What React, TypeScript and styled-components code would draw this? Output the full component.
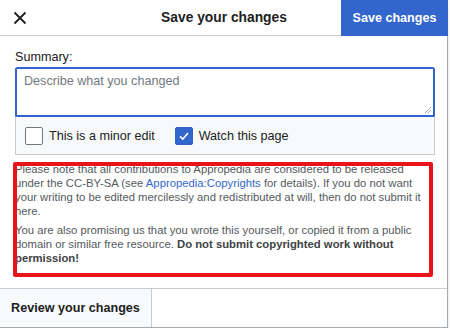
import React from "react";
import styled, { createGlobalStyle } from "styled-components";

const Global = createGlobalStyle`
  html, body { margin: 0; padding: 0; background: #fff; }
  body { font-family: "Liberation Sans", Arial, sans-serif; color: #202122; font-size: 12.6px; }
`;

const Dialog = styled.div`
  width: 448px;
  height: 328px;
  box-sizing: border-box;
  border-right: 1px solid #a2a9b1;
  border-bottom: 1px solid #a2a9b1;
  box-shadow: 0 1px 2px rgba(0,0,0,0.15);
  display: flex;
  flex-direction: column;
  background: #fff;
`;

const Header = styled.div`
  height: 35px;
  border-bottom: 1px solid #c8ccd1;
  display: flex;
  align-items: stretch;
  flex-shrink: 0;
  margin-right: -1px;
`;

const CloseButton = styled.button`
  width: 40px;
  border: 0;
  background: transparent;
  padding: 0;
  display: flex;
  align-items: center;
  justify-content: center;
`;

const Title = styled.div`
  flex: 1;
  display: flex;
  align-items: center;
  justify-content: center;
  font-weight: bold;
  font-size: 13.8px;
  padding-left: 67px;
`;

const PrimaryButton = styled.button`
  width: 107px;
  height: 36px;
  border: 0;
  background: #3366cc;
  color: #fff;
  font-family: inherit;
  font-weight: bold;
  font-size: 12.6px;
  padding: 0;
`;

const Body = styled.div`
  flex: 1;
  padding: 11px 13px 0 15px;
`;

const Label = styled.div`
  font-size: 12.6px;
  line-height: 20px;
`;

const SummaryBox = styled.div`
  width: 420px;
  height: 50px;
  box-sizing: border-box;
  border: 1px solid #3366cc;
  box-shadow: inset 0 0 0 1px #3366cc;
  border-radius: 2px 2px 0 0;
  padding: 6px 8px;
  font-size: 12.6px;
  color: #72777d;
  position: relative;
`;

const Grip = styled.svg`
  position: absolute;
  right: 2px;
  bottom: 2px;
`;

const OptionsBar = styled.div`
  width: 420px;
  height: 38px;
  box-sizing: border-box;
  background: #f8f9fa;
  border: 1px solid #c8ccd1;
  border-top: 0;
  display: flex;
  align-items: center;
  padding-left: 9px;
  gap: 20px;
`;

const Option = styled.label`
  display: flex;
  align-items: center;
  gap: 6px;
  font-size: 12.6px;
`;

const Box = styled.span<{ $checked?: boolean }>`
  width: 18px;
  height: 18px;
  box-sizing: border-box;
  border-radius: 2px;
  border: 1px solid ${(p) => (p.$checked ? "#3366cc" : "#72777d")};
  background: ${(p) => (p.$checked ? "#3366cc" : "#fff")};
  display: flex;
  align-items: center;
  justify-content: center;
`;

const License = styled.div`
  position: relative;
  margin-top: 7px;
  width: 415px;
  font-size: 11.3px;
  line-height: 14px;
  color: #54595d;
`;

const Para = styled.p`
  margin: 0 0 5px;
`;

const Link = styled.a`
  color: #3366cc;
  text-decoration: none;
`;

const Strong = styled.b`
  color: #404244;
`;

const Highlight = styled.div`
  position: absolute;
  left: -2px;
  top: 0;
  width: 420px;
  height: 115px;
  box-sizing: border-box;
  border: 4px solid #e8141a;
  border-radius: 2px;
  pointer-events: none;
`;

const Footer = styled.div`
  height: 38px;
  border-top: 1px solid #c8ccd1;
  display: flex;
  flex-shrink: 0;
`;

const SecondaryButton = styled.button`
  width: 152px;
  border: 0;
  border-right: 1px solid #c8ccd1;
  background: #f8f9fa;
  font-family: inherit;
  font-weight: bold;
  font-size: 12.6px;
  color: #202122;
  padding: 0;
`;

export default function App() {
  return (
    <>
      <Global />
      <Dialog>
        <Header>
          <CloseButton aria-label="Close">
            <svg width="14" height="14" viewBox="0 0 14 14">
              <path d="M1.5 1.5 L12.5 12.5 M12.5 1.5 L1.5 12.5" stroke="#202122" strokeWidth="1.9" />
            </svg>
          </CloseButton>
          <Title>Save your changes</Title>
          <PrimaryButton>Save changes</PrimaryButton>
        </Header>
        <Body>
          <Label>Summary:</Label>
          <SummaryBox>
            Describe what you changed
            <Grip width="8" height="8" viewBox="0 0 8 8">
              <path d="M7 1 L1 7 M7 4 L4 7" stroke="#a2a9b1" strokeWidth="1" />
            </Grip>
          </SummaryBox>
          <OptionsBar>
            <Option>
              <Box />
              This is a minor edit
            </Option>
            <Option>
              <Box $checked>
                <svg width="12" height="12" viewBox="0 0 12 12">
                  <path d="M2 6.3 L4.8 9 L10 3" stroke="#fff" strokeWidth="1.6" fill="none" />
                </svg>
              </Box>
              Watch this page
            </Option>
          </OptionsBar>
          <License>
            <Para>
              Please note that all contributions to Appropedia are considered to be released under the CC-BY-SA (see{" "}
              <Link href="#">Appropedia:Copyrights</Link> for details). If you do not want your writing to be edited
              mercilessly and redistributed at will, then do not submit it here.
            </Para>
            <Para>
              You are also promising us that you wrote this yourself, or copied it from a public domain or similar free
              resource. <Strong>Do not submit copyrighted work without permission!</Strong>
            </Para>
            <Highlight />
          </License>
        </Body>
        <Footer>
          <SecondaryButton>Review your changes</SecondaryButton>
        </Footer>
      </Dialog>
    </>
  );
}
